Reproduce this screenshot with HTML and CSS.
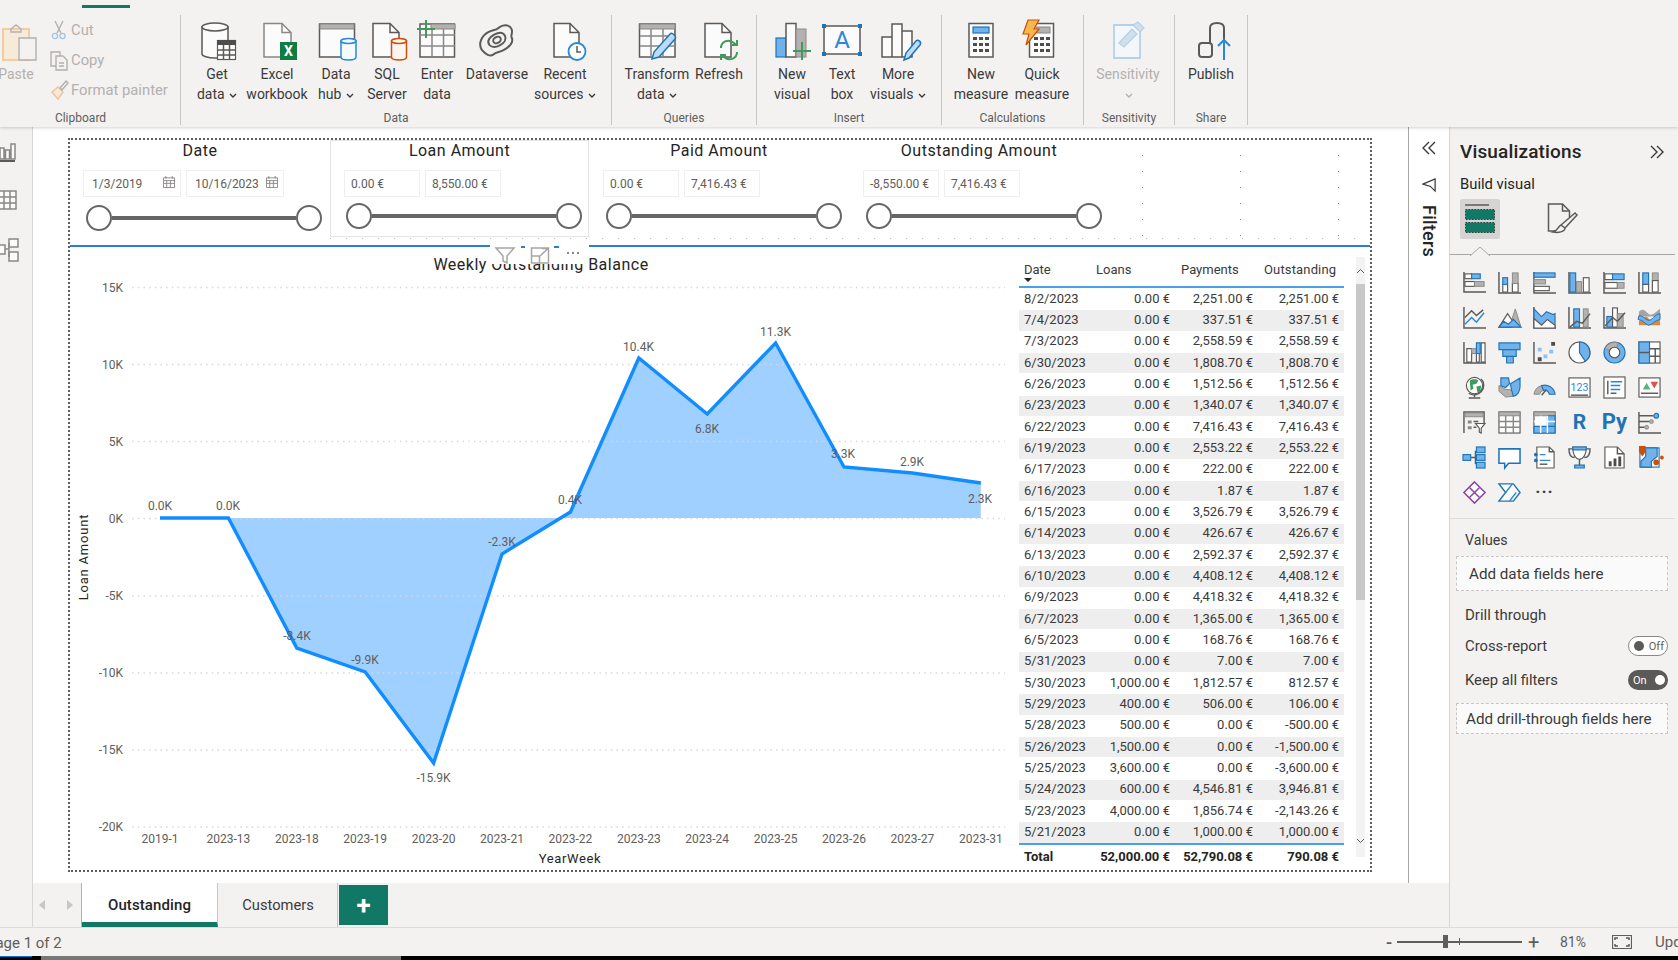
FILE: index.html
```html
<!DOCTYPE html>
<html lang="en">
<head>
<meta charset="utf-8">
<title>Weekly Outstanding Balance</title>
<link rel="stylesheet" href="styles.css">
</head>
<body>
<div class="app">
  <header class="ribbon">
    <span class="tab-ind"></span>
    <section class="grp g-clip">
      <div class="btns">
        <div class="btn b-paste dis">
          <svg class="ic" viewBox="0 0 40 40"><path class="or" d="M7 8h26v31H7z"/><path class="gl" d="M15 8l5-4 5 4v3H15z"/><path class="dw" d="M23 17h17v22H23z"/></svg>
          <span>Paste</span>
        </div>
        <div class="clip-list">
          <div class="clip-it"><svg viewBox="0 0 18 20"><path class="gl" d="M5 1l6 12M13 1L7 13"/><circle class="bp" cx="5" cy="16" r="2.6"/><circle class="bp" cx="12.5" cy="16" r="2.6"/></svg><span>Cut</span></div>
          <div class="clip-it"><svg viewBox="0 0 18 20"><path class="dw" d="M1 2h9v14H1z"/><path class="dw" d="M6 6h7l4 4v10H6z"/><path class="gl" d="M9 13h5M9 16h5"/></svg><span>Copy</span></div>
          <div class="clip-it"><svg viewBox="0 0 18 20"><path class="or2" d="M2 12l6-5 5 5-5 7z"/><path class="gl" d="M10 8l6-7 2 2-6 7z"/></svg><span>Format painter</span></div>
        </div>
      </div>
      <div class="glabel">Clipboard</div>
    </section>

    <section class="grp g-data">
      <div class="btns">
        <div class="btn w56">
          <svg class="ic" viewBox="0 0 40 40"><path class="lw" d="M5 6v27c0 2 6 4 13 4s13-2 13-4V6z"/><ellipse class="lw" cx="18" cy="6" rx="13" ry="4"/><rect class="wf" x="20.500" y="19.500" width="18" height="19"/><path class="dk" d="M20 19h19v5H20z"/><path class="ln" d="M26.500 24v15M32.500 24v15M20 29h19M20 34h19"/></svg>
          <span>Get</span><span>data <svg class="chev" viewBox="0 0 8 5"><path d="M1 1l3 3 3-3"/></svg></span>
        </div>
        <div class="btn w64">
          <svg class="ic" viewBox="0 0 40 40"><path class="lw lg" d="M7 2.500h18l9 9V36H7z"/><path class="ln lg" d="M25 2.500v9h9"/><rect class="xl" x="23" y="21" width="17" height="18"/><text class="xt" x="31.500" y="35">X</text></svg>
          <span>Excel</span><span>workbook</span>
        </div>
        <div class="btn w54">
          <svg class="ic" viewBox="0 0 40 40"><path class="lw" d="M3.500 3h35v33h-35z"/><path class="gf" d="M4 3h34v5H4z"/><path class="cyl-b" d="M25 20v16c0 2 3 3 7.500 3s7.500-1 7.500-3V20z"/><ellipse class="cyl-b" cx="32.500" cy="20" rx="7.500" ry="2.500"/></svg>
          <span>Data</span><span>hub <svg class="chev" viewBox="0 0 8 5"><path d="M1 1l3 3 3-3"/></svg></span>
        </div>
        <div class="btn w48">
          <svg class="ic" viewBox="0 0 40 40"><path class="lw" d="M6 2.500h17l9 9V36H6z"/><path class="ln" d="M23 2.500v9h9"/><path class="cyl-o" d="M24.500 20v16c0 2 3 3 7.500 3s7.500-1 7.500-3V20z"/><ellipse class="cyl-o" cx="32" cy="20" rx="7.500" ry="2.500"/></svg>
          <span>SQL</span><span>Server</span>
        </div>
        <div class="btn w52">
          <svg class="ic" viewBox="0 0 40 40"><path class="lw" d="M3 3h34.500v33H3z"/><path class="gf" d="M14 3h24v5H14z"/><path class="ln lg" d="M3 14h35M3 25h35M15 8v28M26.500 8v28"/><path class="gr" d="M9-1v18M0 8h18"/></svg>
          <span>Enter</span><span>data</span>
        </div>
        <div class="btn w68">
          <svg class="ic" viewBox="0 0 40 40"><g transform="rotate(-28 20 19)"><path class="ln th" d="M2 21c-1-8 7-13 14-13 5 0 7 2 11 1 6-1 11 2 11 7 0 4-4 5-4 8 0 5-7 7-13 7-5 0-7-2-11-1-4 1-7-4-8-9z"/><path class="ln th" d="M11 20c-1-5 4-7 9-7 6 0 9 2 9 6 0 4-4 6-9 6-5 0-8-2-9-5z"/><ellipse class="ln th" cx="20" cy="19" rx="4" ry="3"/></g></svg>
          <span>Dataverse</span>
        </div>
        <div class="btn w68">
          <svg class="ic" viewBox="0 0 40 40"><path class="lw" d="M9 2.500h16l9 9V36H9z"/><path class="ln" d="M25 2.500v9h9"/><circle class="clk" cx="32" cy="30.500" r="8.500"/><path class="ln" d="M32 25v6h4"/></svg>
          <span>Recent</span><span>sources <svg class="chev" viewBox="0 0 8 5"><path d="M1 1l3 3 3-3"/></svg></span>
        </div>
      </div>
      <div class="glabel">Data</div>
    </section>

    <section class="grp g-query">
      <div class="btns">
        <div class="btn w80">
          <svg class="ic" viewBox="0 0 40 40"><path class="lw" d="M2.500 3H38v33H2.500z"/><path class="gf" d="M3 3h35v5H3z"/><path class="ln lg" d="M3 15h35M3 25h35M14 8v28M26 8v28"/><path class="pen" d="M15 38l2-7 16-18c2-2 7 2 5 5L22 36z"/></svg>
          <span>Transform</span><span>data <svg class="chev" viewBox="0 0 8 5"><path d="M1 1l3 3 3-3"/></svg></span>
        </div>
        <div class="btn w44">
          <svg class="ic" viewBox="0 0 40 40"><path class="lw" d="M6 2.500h17l9 9V36H6z"/><path class="ln" d="M23 2.500v9h9"/><path class="gr2" d="M22 27c0-6 7-10 13-5l2 2M38 31c0 6-7 10-13 5l-2-2"/><path class="gr2" d="M38 19v5h-5M22 39v-5h5"/></svg>
          <span>Refresh</span>
        </div>
      </div>
      <div class="glabel">Queries</div>
    </section>

    <section class="grp g-insert">
      <div class="btns">
        <div class="btn w44">
          <svg class="ic" viewBox="0 0 40 40"><rect class="bf" x="4" y="17" width="10" height="19"/><rect class="lw" x="14" y="2.500" width="10" height="33.500"/><rect class="gf" x="24" y="8" width="10" height="28"/><path class="gr" d="M30 21v18M21 30h18"/></svg>
          <span>New</span><span>visual</span>
        </div>
        <div class="btn w56">
          <svg class="ic" viewBox="0 0 40 40"><rect class="lw" x="2" y="5" width="36" height="28"/><path class="sb" d="M0 3h4v4H0zM36 3h4v4h-4zM0 31h4v4H0zM36 31h4v4h-4z"/><text class="at" x="20" y="27">A</text></svg>
          <span>Text</span><span>box</span>
        </div>
        <div class="btn w56">
          <svg class="ic" viewBox="0 0 40 40"><path class="lw" d="M4 16h10v20H4zM14 3h10v33H14zM24 10h10v26H24z"/><path class="pen" d="M26 39l2-7 10-12c2-2 6 1 4 4L31 37z"/></svg>
          <span>More</span><span>visuals <svg class="chev" viewBox="0 0 8 5"><path d="M1 1l3 3 3-3"/></svg></span>
        </div>
      </div>
      <div class="glabel">Insert</div>
    </section>

    <section class="grp g-calc">
      <div class="btns">
        <div class="btn w62">
          <svg class="ic" viewBox="0 0 40 40"><rect class="lw" x="8" y="2.500" width="24" height="33.500"/><rect class="bf" x="12" y="6" width="16" height="6"/><path class="dk" d="M12 16h4v3h-4zM18 16h4v3h-4zM24 16h4v3h-4zM12 22h4v3h-4zM18 22h4v3h-4zM24 22h4v3h-4zM12 28h4v3h-4zM18 28h4v3h-4zM24 28h4v3h-4z"/></svg>
          <span>New</span><span>measure</span>
        </div>
        <div class="btn w60">
          <svg class="ic" viewBox="0 0 40 40"><rect class="lw" x="7.500" y="2.500" width="24" height="33.500"/><rect class="gf" x="14" y="6" width="14" height="6"/><path class="dk" d="M12 16h4v3h-4zM18 16h4v3h-4zM24 16h4v3h-4zM12 22h4v3h-4zM18 22h4v3h-4zM24 22h4v3h-4zM12 28h4v3h-4zM18 28h4v3h-4zM24 28h4v3h-4z"/><path class="bolt" d="M6-1h11l-5 9h5L4 24l3-11H1z"/></svg>
          <span>Quick</span><span>measure</span>
        </div>
      </div>
      <div class="glabel">Calculations</div>
    </section>

    <section class="grp g-sens">
      <div class="btns">
        <div class="btn w88 dis">
          <svg class="ic" viewBox="0 0 40 40"><path class="pb" d="M6 4h26v33H6z"/><path class="pb2" d="M11 22L24 8l5 5-13 13z"/><path class="pb2" d="M25 4l5-3 6 6-4 4z"/></svg>
          <span>Sensitivity</span><span><svg class="chev" viewBox="0 0 8 5"><path d="M1 1l3 3 3-3"/></svg></span>
        </div>
      </div>
      <div class="glabel">Sensitivity</div>
    </section>

    <section class="grp g-share">
      <div class="btns">
        <div class="btn w72">
          <svg class="ic" viewBox="0 0 40 40"><path class="ln th" d="M19 22V7c0-3 2-5 7-5s7 2 7 5v12"/><rect class="ln th" x="8" y="22" width="13" height="14" rx="3"/><path class="bl2" d="M33 39V19M27 25l6-6 6 6"/></svg>
          <span>Publish</span>
        </div>
      </div>
      <div class="glabel">Share</div>
    </section>
  </header>

  <main class="main">
    <div class="left-col">
      <div class="work">
        <nav class="leftnav">
          <svg viewBox="0 0 20 24"><path class="lw gy" d="M0 8h4v11H0zM5.500 10h4v9h-4zM11 4h4v15h-4z"/><path class="ln th" d="M0 21h15"/></svg>
          <svg viewBox="0 0 20 24"><path class="lw gy" d="M-2 2h18v18H-2z"/><path class="ln gy" d="M-2 8h18M-2 14h18M4 2v18M10 2v18"/></svg>
          <svg viewBox="0 0 20 24"><path class="lw gy" d="M9 1h9v8H9zM9 14h9v9H9zM-4 7h9v9h-9z"/><path class="ln gy" d="M5 11h4M9 5v14"/></svg>
        </nav>
        <div class="canvas">
          <div class="report">
            <div class="slicers">
              <div class="slicer s-date">
                <h3>Date</h3>
                <div class="inputs">
                  <div class="inp date">1/3/2019<svg class="cal" viewBox="0 0 13 13"><path class="cal-l" d="M.5 2h12v10.500H.5z"/><path class="cal-l" d="M.5 5h12M3 0v3M10 0v3M.5 8h12M4 5v7M8 5v7"/></svg></div>
                  <div class="inp date">10/16/2023<svg class="cal" viewBox="0 0 13 13"><path class="cal-l" d="M.5 2h12v10.500H.5z"/><path class="cal-l" d="M.5 5h12M3 0v3M10 0v3M.5 8h12M4 5v7M8 5v7"/></svg></div>
                </div>
                <div class="slider low"><i></i><b></b><i></i></div>
              </div>
              <div class="slicer sel">
                <h3>Loan Amount</h3>
                <div class="inputs"><div class="inp">0.00 €</div><div class="inp">8,550.00 €</div></div>
                <div class="slider"><i></i><b></b><i></i></div>
              </div>
              <div class="slicer s-r">
                <h3>Paid Amount</h3>
                <div class="inputs"><div class="inp">0.00 €</div><div class="inp">7,416.43 €</div></div>
                <div class="slider"><i></i><b></b><i></i></div>
              </div>
              <div class="slicer s-r">
                <h3>Outstanding Amount</h3>
                <div class="inputs"><div class="inp">-8,550.00 €</div><div class="inp">7,416.43 €</div></div>
                <div class="slider"><i></i><b></b><i></i></div>
              </div>
            </div>
            <div class="blue-rule"></div>
            <div class="visuals">
              <svg class="chart" viewBox="70 247 945 623" width="945" height="623">
                <text class="c-title" x="541" y="270">Weekly Outstanding Balance</text>
                <polygon class="area" points="228.400,518 296.800,648 365.200,672 433.600,763 502,554 570.400,512 638.800,358 707.200,414 775.600,343 844,467 912.400,473 980.800,483 980.800,518"/>
                <g class="grid">
                  <path d="M132 287.500H1005M132 364.500H1005M132 441.500H1005M132 518.500H1005M132 596H1005M132 673H1005M132 750H1005M132 827H1005"/>
                </g>
                <polyline class="line" points="160,518 228.400,518 296.800,648 365.200,672 433.600,763 502,554 570.400,512 638.800,358 707.200,414 775.600,343 844,467 912.400,473 980.800,483"/>
                <g class="y-lab">
                  <text x="123" y="292">15K</text><text x="123" y="369">10K</text><text x="123" y="446">5K</text><text x="123" y="523">0K</text>
                  <text x="123" y="600">-5K</text><text x="123" y="677">-10K</text><text x="123" y="754">-15K</text><text x="123" y="831">-20K</text>
                </g>
                <g class="x-lab">
                  <text x="160" y="843">2019-1</text><text x="228.400" y="843">2023-13</text><text x="296.800" y="843">2023-18</text><text x="365.200" y="843">2023-19</text><text x="433.600" y="843">2023-20</text><text x="502" y="843">2023-21</text><text x="570.400" y="843">2023-22</text><text x="638.800" y="843">2023-23</text><text x="707.200" y="843">2023-24</text><text x="775.600" y="843">2023-25</text><text x="844" y="843">2023-26</text><text x="912.400" y="843">2023-27</text><text x="980.800" y="843">2023-31</text>
                </g>
                <g class="x-lab">
                  <text x="160" y="510">0.0K</text><text x="228" y="510">0.0K</text><text x="297" y="640">-8.4K</text><text x="365" y="664">-9.9K</text><text x="433.500" y="782">-15.9K</text><text x="502" y="546">-2.3K</text><text x="570" y="504">0.4K</text><text x="638.500" y="351">10.4K</text><text x="707" y="433">6.8K</text><text x="775.500" y="336">11.3K</text><text x="843" y="458">3.3K</text><text x="912" y="466">2.9K</text><text x="980" y="503">2.3K</text>
                </g>
                <text class="ax-t" x="570" y="863">YearWeek</text>
                <text class="ax-t ax-y" transform="translate(88 557) rotate(-90)">Loan Amount</text>
              </svg>
              <table class="tbl">
                <thead>
                  <tr><th>Date<span class="sort"></span></th><th>Loans</th><th>Payments</th><th>Outstanding</th></tr>
                </thead>
                <tbody>
                  <tr><td>8/2/2023</td><td>0.00 €</td><td>2,251.00 €</td><td>2,251.00 €</td></tr>
                  <tr><td>7/4/2023</td><td>0.00 €</td><td>337.51 €</td><td>337.51 €</td></tr>
                  <tr><td>7/3/2023</td><td>0.00 €</td><td>2,558.59 €</td><td>2,558.59 €</td></tr>
                  <tr><td>6/30/2023</td><td>0.00 €</td><td>1,808.70 €</td><td>1,808.70 €</td></tr>
                  <tr><td>6/26/2023</td><td>0.00 €</td><td>1,512.56 €</td><td>1,512.56 €</td></tr>
                  <tr><td>6/23/2023</td><td>0.00 €</td><td>1,340.07 €</td><td>1,340.07 €</td></tr>
                  <tr><td>6/22/2023</td><td>0.00 €</td><td>7,416.43 €</td><td>7,416.43 €</td></tr>
                  <tr><td>6/19/2023</td><td>0.00 €</td><td>2,553.22 €</td><td>2,553.22 €</td></tr>
                  <tr><td>6/17/2023</td><td>0.00 €</td><td>222.00 €</td><td>222.00 €</td></tr>
                  <tr><td>6/16/2023</td><td>0.00 €</td><td>1.87 €</td><td>1.87 €</td></tr>
                  <tr><td>6/15/2023</td><td>0.00 €</td><td>3,526.79 €</td><td>3,526.79 €</td></tr>
                  <tr><td>6/14/2023</td><td>0.00 €</td><td>426.67 €</td><td>426.67 €</td></tr>
                  <tr><td>6/13/2023</td><td>0.00 €</td><td>2,592.37 €</td><td>2,592.37 €</td></tr>
                  <tr><td>6/10/2023</td><td>0.00 €</td><td>4,408.12 €</td><td>4,408.12 €</td></tr>
                  <tr><td>6/9/2023</td><td>0.00 €</td><td>4,418.32 €</td><td>4,418.32 €</td></tr>
                  <tr><td>6/7/2023</td><td>0.00 €</td><td>1,365.00 €</td><td>1,365.00 €</td></tr>
                  <tr><td>6/5/2023</td><td>0.00 €</td><td>168.76 €</td><td>168.76 €</td></tr>
                  <tr><td>5/31/2023</td><td>0.00 €</td><td>7.00 €</td><td>7.00 €</td></tr>
                  <tr><td>5/30/2023</td><td>1,000.00 €</td><td>1,812.57 €</td><td>812.57 €</td></tr>
                  <tr><td>5/29/2023</td><td>400.00 €</td><td>506.00 €</td><td>106.00 €</td></tr>
                  <tr><td>5/28/2023</td><td>500.00 €</td><td>0.00 €</td><td>-500.00 €</td></tr>
                  <tr><td>5/26/2023</td><td>1,500.00 €</td><td>0.00 €</td><td>-1,500.00 €</td></tr>
                  <tr><td>5/25/2023</td><td>3,600.00 €</td><td>0.00 €</td><td>-3,600.00 €</td></tr>
                  <tr><td>5/24/2023</td><td>600.00 €</td><td>4,546.81 €</td><td>3,946.81 €</td></tr>
                  <tr><td>5/23/2023</td><td>4,000.00 €</td><td>1,856.74 €</td><td>-2,143.26 €</td></tr>
                  <tr><td>5/21/2023</td><td>0.00 €</td><td>1,000.00 €</td><td>1,000.00 €</td></tr>
                </tbody>
                <tfoot>
                  <tr><td>Total</td><td>52,000.00 €</td><td>52,790.08 €</td><td>790.08 €</td></tr>
                </tfoot>
              </table>
              <div class="vscroll">
                <div class="vs-btn"><svg viewBox="0 0 9 6"><path d="M1 5l3.500-3.500L8 5"/></svg></div>
                <div class="vs-thumb"></div>
                <div class="vs-track"><svg viewBox="0 0 9 6"><path d="M1 1l3.500 3.500L8 1"/></svg></div>
              </div>
              <svg class="vis-head" viewBox="0 0 99 24">
                <rect class="vh-bg" width="99" height="24"/>
                <path class="vh-dash" d="M31 6h4v2h-4zM64 6h5v2h-5z"/>
                <path class="vh-ic" d="M6 8h18l-7 8v7l-4-2v-5z"/>
                <path class="vh-ic" d="M41.500 8h17v15h-17zM41.500 16h8v7M50 16l8-7.500M52 8.500h6.500V14"/>
                <path class="vh-dots" d="M77 12h2v2h-2zM82 12h2v2h-2zM87 12h2v2h-2z"/>
              </svg>
            </div>
          </div>
        </div>
        <aside class="filters">
          <svg class="dbl" viewBox="0 0 16 16"><path d="M8 2L2 8l6 6M14 2L8 8l6 6"/></svg>
          <svg class="fun" viewBox="0 0 16 16"><path d="M14 1v13L9 9 1 6.500z"/></svg>
          <span class="f-txt">Filters</span>
        </aside>
      </div>
      <div class="tabbar">
        <div class="tb-gutter"></div>
        <div class="tb-arrows"><span class="arr-l"></span><span class="arr-r"></span></div>
        <div class="tab on">Outstanding</div>
        <div class="tab">Customers</div>
        <div class="tab-add">+</div>
      </div>
    </div>

    <aside class="viz">
      <div class="viz-head"><h2>Visualizations</h2><svg class="dbl" viewBox="0 0 16 16"><path d="M2 2l6 6-6 6M8 2l6 6-6 6"/></svg></div>
      <div class="bv">Build visual</div>
      <div class="bv-row">
        <div class="bv-sel"><svg viewBox="0 0 32 32"><path class="ln" d="M1 2h24"/><rect class="grn" x="1.500" y="6.500" width="29" height="10"/><rect class="grn" x="1.500" y="19.500" width="29" height="10"/></svg></div>
        <svg class="bv-fmt" viewBox="0 0 32 32"><path class="ln" d="M9 28H1.500V1h14l7 7v6"/><path class="ln" d="M15.500 1v7h7"/><path class="ln" d="M14 22L28 10l2 2-12 13zM14 22c-3 1-2 5-8 7 5 1 12 0 12-4"/></svg>
      </div>
      <div class="notch-row"><svg class="notch" viewBox="0 0 20 10"><path d="M0 10L10 1l10 9"/></svg></div>
      <div class="icons">
        <svg viewBox="0 0 24 24"><path class="ln" d="M1 1v21h23"/><rect class="wf" x="2" y="3" width="7" height="5"/><rect class="bf" x="9" y="3" width="9" height="5"/><rect class="wf" x="2" y="11" width="10" height="5"/><rect class="gf" x="12" y="11" width="10" height="5"/></svg>
        <svg viewBox="0 0 24 24"><path class="ln" d="M1 1v22h23"/><rect class="wf" x="5" y="14" width="5" height="8"/><rect class="bf" x="5" y="7" width="5" height="7"/><rect class="wf" x="15" y="13" width="6" height="9"/><rect class="gf" x="15" y="2" width="6" height="11"/></svg>
        <svg viewBox="0 0 24 24"><path class="ln" d="M1 1v22h23"/><rect class="bf" x="1" y="2" width="22" height="4.500"/><rect class="gf" x="1" y="9" width="12" height="4.500"/><rect class="wf" x="1" y="16" width="16" height="4.500"/></svg>
        <svg viewBox="0 0 24 24"><path class="ln" d="M1 1v22h23"/><rect class="bf" x="2" y="2" width="6" height="20"/><rect class="gf" x="9" y="11" width="5" height="11"/><rect class="wf" x="16" y="7" width="6" height="15"/></svg>
        <svg viewBox="0 0 24 24"><path class="ln" d="M1 1v22h23"/><rect class="wf" x="2" y="3" width="8" height="6"/><rect class="bf" x="10" y="3" width="12" height="6"/><rect class="wf" x="2" y="12" width="13" height="6"/><rect class="gf" x="15" y="12" width="7" height="6"/></svg>
        <svg viewBox="0 0 24 24"><path class="ln" d="M1 1v22h23"/><rect class="bf" x="5" y="2" width="6" height="12"/><rect class="wf" x="5" y="14" width="6" height="8"/><rect class="gf" x="15" y="2" width="6" height="8"/><rect class="wf" x="15" y="10" width="6" height="12"/></svg>

        <svg viewBox="0 0 24 24"><path class="ln" d="M1 1v22h23"/><path class="ln" d="M2 12l7-7 5 5 7-6"/><path class="bl" d="M2 19l7-7 5 5 8-10"/></svg>
        <svg viewBox="0 0 24 24"><path class="gf" d="M12 22L18 3l6 19z"/><path class="wf" d="M1 22l9-14 6 9-2 5z"/><path class="bf" d="M1 22l5-6 5 3 5-5 8 8z"/></svg>
        <svg viewBox="0 0 24 24"><path class="ln" d="M1 1v22h23"/><path class="bf" d="M1 3l8 8 5-5 7 3 2-1v14H1z"/><path class="wf" d="M1 13l8 7 6-6 8 6v3H1z"/></svg>
        <svg viewBox="0 0 24 24"><path class="ln" d="M1 1v22h23"/><rect class="bf" x="6" y="3" width="6" height="19"/><rect class="gf" x="16" y="3" width="5" height="19"/><path class="ln" d="M2 22l7-6 6 2 8-10"/></svg>
        <svg viewBox="0 0 24 24"><path class="ln" d="M1 1v22h23"/><rect class="bf" x="4" y="11" width="6" height="11"/><rect class="wf" x="10" y="2" width="5" height="20"/><rect class="gf" x="15" y="8" width="6" height="14"/><path class="ln" d="M2 21l8-9 5 4 8-9"/></svg>
        <svg viewBox="0 0 24 24"><path class="rg" d="M1 6c6-6 8 3 12 3s6-4 10-6v8H1z"/><path class="ro" d="M1 15c4 0 5-4 8-4l5 5 9-4v8H1z"/><path class="rb" d="M1 10c5 0 6 4 10 5 4 0 6-6 12-7v6c-6 1-8 6-12 6-4-1-6-6-11-6z"/></svg>

        <svg viewBox="0 0 24 24"><path class="ln" d="M1 1v22h23"/><path class="wf" d="M4 8h5v14H4zM14 10h3v12h-3zM19 2h4v20h-4z"/><path class="gf" d="M9 8h5v5H9z"/><path class="bf" d="M14 2h4v11h-4z"/></svg>
        <svg viewBox="0 0 24 24"><path class="bf" d="M1 2h22v7H1zM5 9h14v7H5zM9 16h7v7H9z"/></svg>
        <svg viewBox="0 0 24 24"><path class="ln" d="M1 1v22h23"/><path class="sq1" d="M5 7h4v4H5zM11 14h4v4h-4zM17 9h4v4h-4z"/><path class="dk" d="M5 17h4v4H5zM19 1h4v4h-4z"/></svg>
        <svg viewBox="0 0 24 24"><circle class="wf" cx="12" cy="12" r="11"/><path class="bf" d="M12 1a11 11 0 0 1 6 20L12 12z"/></svg>
        <svg viewBox="0 0 24 24"><circle class="bf" cx="12" cy="12" r="11"/><path class="gf" d="M2 8a11 11 0 0 1 14-6l-2 5a6 6 0 0 0-7 3z"/><circle class="wf" cx="12" cy="12" r="5.500"/></svg>
        <svg viewBox="0 0 24 24"><rect class="wf" x="1" y="1" width="22" height="22"/><path class="bf" d="M1 1h11v22H1z"/><path class="ln" d="M1 12h11M12 8h11M12 16h11M18 8v15"/></svg>

        <svg viewBox="0 0 24 24"><circle class="wf" cx="12" cy="10" r="8.500"/><path class="gob" d="M7 5c3-2 7-2 9 0l-2 3-4 1 1 4-3 2zM14 11l5-1-1 6-3 1z"/><path class="ln" d="M19 3a10 10 0 0 1-13 15M12 19v3M6 23h12"/></svg>
        <svg viewBox="0 0 24 24"><path class="gf" d="M1 10v6l7 6 9-1 3-6-12-1z"/><path class="bf" d="M3 2l8 0 1 6-4 4-5-2zM13 8l10-6v9c0 5-3 10-7 10l-2-7z"/></svg>
        <svg viewBox="0 0 24 24"><path class="gf" d="M1 19a11 11 0 0 1 8-9l2 5a5 5 0 0 0-4 4z"/><path class="bf" d="M9 10a11 11 0 0 1 14 9h-6a5 5 0 0 0-6-4z"/><path class="ln" d="M9 20l5-6"/></svg>
        <svg viewBox="0 0 24 24"><rect class="wf" x="1" y="2" width="22" height="20"/><text class="num" x="12" y="16">123</text><path class="ln" d="M3 20h18"/></svg>
        <svg viewBox="0 0 24 24"><rect class="wf" x="1" y="1" width="22" height="22"/><path class="ln" d="M5 5v14"/><path class="bl" d="M8 6h12M8 10h10M8 14h10"/><path class="ln" d="M8 18h6"/></svg>
        <svg viewBox="0 0 24 24"><rect class="wf" x="1" y="2" width="22" height="20"/><path class="tg" d="M5 14l4-7 4 7z"/><path class="tr" d="M13 6h8l-4 7z"/><path class="ln" d="M3 18h18"/></svg>

        <svg viewBox="0 0 24 24"><path class="ln" d="M1 23V1h21v12"/><path class="gf" d="M2 2h19v4H2z"/><path class="sq2" d="M5 10h4v3H5zM5 16h4v3H5z"/><path class="ln" d="M11 11h5M11 17h3"/><path class="wf" d="M13 13h10l-4 5v5l-2-1v-4z"/></svg>
        <svg viewBox="0 0 24 24"><rect class="wf" x="1" y="1" width="22" height="22"/><path class="gf" d="M1 1h22v4H1z"/><path class="ln lg" d="M1 11h22M1 17h22M8 5v18M16 5v18"/></svg>
        <svg viewBox="0 0 24 24"><rect class="wf" x="1" y="1" width="22" height="22"/><path class="gf" d="M1 1h22v4H1z"/><path class="bf" d="M1 16h22v7H1zM15 5h8v18h-8z"/><path class="ln lw0" d="M1 11h22M8 5v18M15 5v18"/></svg>
        <div class="txt-ic r">R</div>
        <div class="txt-ic py">Py</div>
        <svg viewBox="0 0 24 24"><path class="ln" d="M1 1v22h23"/><path class="ln" d="M1 5h15M1 11h11M1 17h6"/><circle class="bf" cx="19" cy="5" r="2.500"/><circle class="gf" cx="14" cy="11" r="2"/><circle class="gf" cx="9" cy="17" r="2"/></svg>

        <svg viewBox="0 0 24 24"><path class="ln" d="M8 12h5M13 5v14"/><rect class="bf" x="0" y="9" width="8" height="6"/><rect class="bf" x="14" y="1" width="9" height="6"/><rect class="bf" x="14" y="9" width="9" height="6"/><rect class="bf" x="14" y="17" width="9" height="6"/></svg>
        <svg viewBox="0 0 24 24"><path class="bub" d="M1 3h22v15H11l-4 5v-5H1z"/></svg>
        <svg viewBox="0 0 24 24"><path class="wf" d="M4 1h13l5 5v17H4z"/><path class="ln" d="M17 1v5h5"/><circle class="sb" cx="3" cy="9" r="2"/><circle class="sb" cx="3" cy="15" r="2"/><path class="bl" d="M7 9h6M7 15h11"/><path class="ln" d="M7 19h8"/></svg>
        <svg viewBox="0 0 24 24"><path class="ln" d="M5 3H1c0 6 2 9 6 9M19 3h4c0 6-2 9-6 9"/><path class="wf" d="M5 1h14c0 8-2 12-7 13C7 13 5 9 5 1z"/><path class="bf" d="M5 1h14v3H5zM7 20h10v3H7z"/><path class="ln" d="M12 14v6"/></svg>
        <svg viewBox="0 0 24 24"><path class="wf" d="M2 1h13l7 7v15H2z"/><path class="ln" d="M15 1v7h7"/><path class="dk" d="M6 16h3v5H6zM11 13h3v8h-3zM16 11h3v10h-3z"/></svg>
        <svg viewBox="0 0 24 24"><rect class="wf mapb" x="2" y="2" width="20" height="20"/><path class="bf" d="M8 2h12v9l-6 5v6H3v-6l5-5z"/><path class="sf" d="M1 0h7v6l-3.500 5L1 6zM19 14a3 3 0 1 1 0 6 3 3 0 0 1 0-6zM23 12a2 2 0 1 1 0 .1z"/></svg>

        <svg viewBox="0 0 24 24"><path class="pa" d="M12 1l11 11-11 11L1 12z"/><path class="pa" d="M7 7l10 10M17 7L7 17"/></svg>
        <svg viewBox="0 0 24 24"><path class="bf2" d="M1 3h15l7 9-7 9H1l7-9z"/><path class="bl" d="M8 12l7-9M12 21l7-9"/></svg>
        <div class="txt-ic more">···</div>
      </div>
      <div class="viz-rule"></div>
      <div class="sec-t">Values</div>
      <div class="drop d1">Add data fields here</div>
      <div class="sec-h">Drill through</div>
      <div class="opt o1"><span>Cross-report</span><span class="tgl off"><i></i>Off</span></div>
      <div class="opt o2"><span>Keep all filters</span><span class="tgl on">On<i></i></span></div>
      <div class="drop d2">Add drill-through fields here</div>
    </aside>
  </main>

  <footer class="status">
    <span class="pg">Page 1 of 2</span>
    <div class="st-right">
      <span class="zm">-</span>
      <div class="zslider"><i class="z-h"></i><i class="z-t"></i></div>
      <span class="zp">+</span>
      <span class="pct">81%</span>
      <svg class="fit" viewBox="0 0 20 14"><path class="fit-b" d="M.5.500h19v13H.5z"/><path class="ln" d="M3 5V3h3M17 5V3h-3M3 9v2h3M17 9v2h-3"/></svg>
      <span class="upd">Update available</span>
    </div>
  </footer>
  <div class="taskbar"><span class="t-a"></span><span class="t-b"></span><span class="t-c"></span><span class="t-d"></span></div>
</div>
</body>
</html>
```
FILE: styles.css
```css
* { box-sizing: border-box; }
html, body { margin: 0; height: 100%; overflow: hidden; }
body { font-family: Roboto, "Liberation Sans", sans-serif; color: #252423; background: #f3f2f1; }
.app { width: 1678px; height: 960px; display: flex; flex-direction: column; overflow: hidden; }

/* ribbon */
.ribbon { position: relative; z-index: 2; height: 127px; flex: none; display: flex; padding-top: 15px; background: #f3f2f1; box-shadow: 0 1px 3px rgba(0,0,0,.18); }
.tab-ind { position: absolute; left: 82px; top: 5px; width: 48px; height: 3px; background: #117865; }
.grp { display: flex; flex-direction: column; height: 110px; border-right: 1px solid #c8c6c4; flex: none; }
.g-clip { width: 200px; margin-left: -19px; }
.g-data { width: 431px; }
.g-data .btns { padding-left: 8px; }
.g-query { width: 145px; }
.g-query .btns { padding-left: 5px; }
.g-insert { width: 185px; }
.g-insert .btns { padding-left: 13px; }
.g-calc { width: 142px; }
.g-calc .btns { padding-left: 8px; }
.g-sens { width: 91px; }
.g-share { width: 73px; }
.btns { display: flex; height: 97px; flex: none; }
.glabel { font-size: 12px; line-height: 13px; color: #605e5c; text-align: center; }
.btn { display: flex; flex-direction: column; align-items: center; font-size: 14px; line-height: 20px; color: #3b3a39; white-space: nowrap; padding-top: 6px; flex: none; }
.btn > span { height: 20px; display: block; }
.ic { width: 40px; height: 40px; overflow: visible; margin-bottom: 3px; flex: none; }
.w44 { width: 44px; } .w48 { width: 48px; } .w52 { width: 52px; } .w54 { width: 54px; } .w56 { width: 56px; }
.w60 { width: 60px; } .w62 { width: 62px; } .w64 { width: 64px; } .w68 { width: 68px; } .w72 { width: 72px; } .w80 { width: 80px; } .w88 { width: 88px; }
.dis, .dis span { color: #b3b0ad; }
.b-paste { width: 70px; }
.clip-list { display: flex; flex-direction: column; margin-left: -1px; }
.clip-it { display: flex; align-items: center; height: 30px; font-size: 14.800px; color: #b3b0ad; white-space: nowrap; }
.clip-it svg { width: 18px; height: 20px; margin-right: 3px; overflow: visible; }
.chev { width: 8px; height: 5px; vertical-align: 1px; margin-left: 1px; }
.chev path { fill: none; stroke: #3b3a39; stroke-width: 1.4; }
.dis .chev path { stroke: #b3b0ad; }

/* svg paints */
.ln { fill: none; stroke: #5c5a58; stroke-width: 1.5; }
.lw { fill: #fbfbfb; stroke: #5c5a58; stroke-width: 1.5; }
.lg { stroke: #8a8886; }
.lw0 { stroke: #fff; }
.gy { stroke: #8a8886; }
.th { stroke-width: 2; }
.wf { fill: #fff; stroke: #5c5a58; stroke-width: 1.2; }
.gf { fill: #b4b2b0; stroke: #8a8886; stroke-width: 1; }
.bf { fill: #72b2ea; stroke: #1f74b8; stroke-width: 1.2; }
.bf2 { fill: #fff; stroke: #1f74b8; stroke-width: 1.5; }
.bl { fill: none; stroke: #2b88d8; stroke-width: 1.5; }
.bl2 { fill: none; stroke: #2b88d8; stroke-width: 2; }
.dk { fill: #4f4d4b; }
.sb { fill: #1f74b8; }
.sf { fill: #ca5010; }
.gr { fill: none; stroke: #3f9a5b; stroke-width: 2; }
.gr2 { fill: none; stroke: #3f9a5b; stroke-width: 2; }
.xl { fill: #107c41; }
.xt { fill: #fff; font-size: 14px; font-weight: 700; text-anchor: middle; }
.at { fill: #2b88d8; font-size: 24px; text-anchor: middle; }
.cyl-b { fill: #f5fafd; stroke: #2b88d8; stroke-width: 1.5; }
.cyl-o { fill: #fdf6ef; stroke: #ca5010; stroke-width: 1.5; }
.clk { fill: #fff; stroke: #2b88d8; stroke-width: 1.8; }
.pen { fill: #bcdcf5; stroke: #1f74b8; stroke-width: 1.5; }
.bolt { fill: #f7b84b; stroke: #ca5010; stroke-width: 1.2; }
.pb { fill: #f3f7fa; stroke: #b3d2e8; stroke-width: 1.8; }
.pb2 { fill: #cfe0ec; stroke: #b3d2e8; stroke-width: 1.2; }
.or { fill: #f7ead9; stroke: #f2cda4; stroke-width: 2; }
.or2 { fill: #f7ead9; stroke: #eec49a; stroke-width: 1.4; }
.gl { fill: none; stroke: #b3b0ad; stroke-width: 1.4; }
.dw { fill: #f3f2f1; stroke: #b3b0ad; stroke-width: 1.4; }
.bp { fill: none; stroke: #9fc6e6; stroke-width: 1.3; }
.rg { fill: #a6a4a2; }
.ro { fill: #d98a3c; }
.rb { fill: #72b2ea; stroke: #1f74b8; stroke-width: 1; }
.sq1 { fill: #8fc1ea; }
.sq2 { fill: #8a8886; }
.gob { fill: #3f9a5b; }
.tg { fill: #5cb37a; }
.tr { fill: #d9534f; }
.bub { fill: #fff; stroke: #1f74b8; stroke-width: 1.6; }
.pa { fill: #fff; stroke: #8e44a8; stroke-width: 1.6; }
.mapb { stroke: #1f74b8; }
.num { fill: #2b88d8; font-size: 11px; text-anchor: middle; }
.grn { fill: #117865; stroke: #3b3a39; stroke-width: 1; stroke-dasharray: 1.5 1.5; }

/* main */
.main { height: 800px; flex: none; display: flex; }
.left-col { width: 1449px; flex: none; display: flex; flex-direction: column; }
.work { height: 756px; flex: none; display: flex; background: #fff; }
.leftnav { width: 33px; flex: none; background: #f3f2f1; border-right: 1px solid #d8d6d4; padding-top: 13px; display: flex; flex-direction: column; gap: 25px; overflow: hidden; }
.leftnav svg { width: 20px; height: 24px; display: block; overflow: visible; flex: none; }
.canvas { width: 1375px; flex: none; padding: 11px 0 0 35px; }
.report { width: 1304px; height: 734px; border: 2px dotted #605e5c; display: flex; flex-direction: column; }
.slicers { height: 105px; flex: none; display: flex; align-items: flex-start;
  background-image:
    repeating-linear-gradient(90deg, #b8b8b8 0 1px, transparent 1px 16px),
    repeating-linear-gradient(180deg, #8a8a8a 0 1px, transparent 1px 16px),
    repeating-linear-gradient(180deg, #8a8a8a 0 1px, transparent 1px 16px),
    repeating-linear-gradient(180deg, #8a8a8a 0 1px, transparent 1px 16px);
  background-size: 1040px 1px, 1px 85px, 1px 85px, 1px 85px;
  background-position: 260px 98px, 1072px 15px, 1170px 15px, 1268px 15px;
  background-repeat: no-repeat; }
.slicer { width: 260px; height: 97px; flex: none; padding-left: 14px; background: #fff; }
.sel { width: 259px; box-shadow: inset 0 0 0 1px #e4e4e4; }
.slicer h3 { margin: 0 0 0 -14px; font-size: 16px; font-weight: 400; line-height: 22px; text-align: center; letter-spacing: .5px; color: #252423; }
.inputs { display: flex; gap: 5px; margin-top: 8px; }
.s-date .inputs { margin-left: -1px; }
.inp { width: 76px; height: 27px; border: 1px solid #efefef; display: flex; align-items: center; padding-left: 6px; font-size: 12px; color: #605e5c; white-space: nowrap; }
.date { width: 98px; padding-left: 8px; justify-content: space-between; padding-right: 5px; }
.cal { width: 12px; height: 12px; flex: none; margin-top: -4px; }
.cal-l { fill: none; stroke: #8a8886; stroke-width: 1; }
.slider { display: flex; align-items: center; width: 236px; margin: 6px 0 0 2px; }
.s-r .slider { margin-left: 3px; }
.low { margin-top: 8px; }
.slider i { width: 26px; height: 26px; border: 2px solid #666; border-radius: 50%; background: #fff; flex: none; }
.slider b { flex: 1; height: 4px; background: #666; }
.blue-rule { height: 2px; flex: none; background: #2b7cd3; }
.visuals { position: relative; display: flex; flex: 1; align-items: flex-start; }
.chart { flex: none; display: block; }
.c-title { font-size: 16px; letter-spacing: .5px; text-anchor: middle; fill: #252423; }
.area { fill: #a0d0ff; }
.grid path { fill: none; stroke: #d8d8d8; stroke-width: 1.5; stroke-dasharray: 1.5 4.2; }
.line { fill: none; stroke: #118dff; stroke-width: 3.4; stroke-linejoin: miter; }
.y-lab text { font-size: 12px; fill: #605e5c; text-anchor: end; }
.x-lab text { font-size: 12px; fill: #605e5c; text-anchor: middle; }
.ax-t { font-size: 13px; letter-spacing: .6px; fill: #252423; text-anchor: middle; }
.ax-y { letter-spacing: .8px; }
.tbl { width: 325px; margin: 10px 0 0 4px; table-layout: fixed; border-collapse: separate; border-spacing: 0; font-size: 13px; color: #3b3a39; flex: none; }
.tbl th:nth-child(1), .tbl td:nth-child(1) { width: 71px; }
.tbl th:nth-child(2), .tbl td:nth-child(2) { width: 85px; }
.tbl th:nth-child(3), .tbl td:nth-child(3) { width: 83px; }
.tbl th:nth-child(4), .tbl td:nth-child(4) { width: 86px; }
.tbl th { height: 31px; padding: 4px 0 0 6px; vertical-align: top; font-weight: 400; line-height: 18px; text-align: left; border-bottom: 2px solid #4aa0ec; color: #3b3a39; }
.tbl th:first-child { padding-left: 5px; }
.tbl th:last-child { letter-spacing: .15px; }
.sort { display: block; width: 0; height: 0; margin: -1px 0 0 0; border: 4px solid transparent; border-top-color: #252423; border-bottom: 0; }
.tbl td { height: 21.33px; padding: 0 5px 0 0; line-height: 16px; text-align: right; white-space: nowrap; }
.tbl td:first-child { text-align: left; padding-left: 5px; }
.tbl tbody tr:nth-child(even) td { background: #eeeeee; box-shadow: inset 0 1px 0 #fff; }
.tbl tfoot td { height: 26px; font-weight: 700; color: #252423; border-top: 2px solid #4aa0ec; }
.vscroll { width: 9px; height: 600px; margin: 10px 0 0 12px; display: flex; flex-direction: column; flex: none; background: #f3f3f3; }
.vs-btn { height: 27px; display: flex; align-items: center; justify-content: center; flex: none; }
.vs-thumb { height: 316px; background: #c8c8c8; flex: none; }
.vs-track { flex: 1; display: flex; align-items: flex-end; justify-content: center; padding-bottom: 13px; }
.vscroll svg { width: 9px; height: 6px; }
.vscroll path { fill: none; stroke: #605e5c; stroke-width: 1; }
.vis-head { position: absolute; left: 420px; top: -7px; width: 99px; height: 24px; }
.vh-bg { fill: #fff; }
.vh-dash { fill: #2b7cd3; }
.vh-ic { fill: none; stroke: #a8a6a4; stroke-width: 1.5; }
.vh-dots { fill: #8a8886; }

.filters { width: 41px; flex: none; border-left: 1px solid #a9a7a5; display: flex; flex-direction: column; align-items: center; background: #fff; }
.dbl { width: 16px; height: 16px; flex: none; }
.dbl path { fill: none; stroke: #3b3a39; stroke-width: 1.4; }
.filters .dbl { margin-top: 13px; }
.fun { width: 15px; height: 15px; margin-top: 22px; }
.fun path { fill: none; stroke: #3b3a39; stroke-width: 1.3; }
.f-txt { writing-mode: vertical-rl; font-size: 18px; font-weight: 500; margin-top: 12px; color: #252423; letter-spacing: .25px; }

/* tabs */
.tabbar { height: 44px; flex: none; display: flex; background: #f3f2f1; }
.tb-gutter { width: 33px; flex: none; border-right: 1px solid #d8d6d4; }
.tb-arrows { width: 49px; flex: none; border-right: 1px solid #b3b0ad; display: flex; align-items: center; gap: 22px; padding-left: 6px; }
.arr-l { width: 0; height: 0; border: 5px solid transparent; border-left: 0; border-right: 6px solid #c8c6c4; }
.arr-r { width: 0; height: 0; border: 5px solid transparent; border-right: 0; border-left: 6px solid #c8c6c4; }
.tab { display: flex; align-items: center; justify-content: center; width: 120px; font-size: 14.700px; color: #3b3a39; border-right: 1px solid #c8c6c4; padding-left: 1px; }
.tab.on { width: 136px; background: #fff; color: #252423; font-size: 15px; font-weight: 500; letter-spacing: .1px; border-bottom: 5px solid #117865; padding: 5px 0 0; }
.tab-add { width: 49px; height: 40px; margin: 2px 0 0 1px; background: #117865; color: #fff; font-size: 26px; font-weight: 700; display: flex; align-items: center; justify-content: center; line-height: 1; }

/* viz pane */
.viz { width: 229px; flex: none; border-left: 1px solid #d8d6d4; background: #f3f2f1; display: flex; flex-direction: column; overflow: hidden; }
.viz-head { display: flex; align-items: center; justify-content: space-between; padding: 14px 13px 0 10px; height: 36px; flex: none; }
.viz-head h2 { margin: 0; font-size: 19px; font-weight: 500; line-height: 22px; color: #252423; letter-spacing: .15px; }
.bv { margin: 12px 0 0 10px; font-size: 14.800px; line-height: 18px; color: #252423; flex: none; }
.bv-row { display: flex; align-items: center; margin: 6px 0 0 10px; flex: none; }
.bv-sel { width: 40px; height: 40px; background: #d6d4d2; display: flex; align-items: center; justify-content: center; border-radius: 2px; }
.bv-sel svg { width: 32px; height: 32px; }
.bv-fmt { width: 32px; height: 32px; margin-left: 47px; }
.notch-row { height: 10px; margin: 6px 3px 0 0; border-bottom: 1px solid #a9a7a5; flex: none; }
.notch { display: block; width: 20px; height: 10px; margin-left: 20px; position: relative; top: 1px; }
.notch path { fill: #f3f2f1; stroke: #a9a7a5; stroke-width: 1; }
.icons { display: grid; grid-template-columns: repeat(6, 35px); grid-auto-rows: 35px; margin: 9.500px 0 0 7px; place-items: center; flex: none; }
.icons svg { width: 23px; height: 23px; overflow: visible; }
.txt-ic { width: 30px; text-align: center; line-height: 24px; font-weight: 700; color: #1f74b8; }
.r { font-size: 21px; }
.py { font-size: 22px; white-space: nowrap; }
.more { color: #3b3a39; font-size: 17px; letter-spacing: 1px; }
.viz-rule { height: 1px; margin: 8.500px 3px 0 0; background: #dedcda; flex: none; }
.sec-t { margin: 12px 0 0 15px; font-size: 14.200px; line-height: 18px; color: #3b3a39; flex: none; }
.sec-h { margin: 15px 0 0 15px; font-size: 15px; line-height: 18px; color: #3b3a39; flex: none; }
.drop { width: 212px; margin-left: 6px; border: 1px dashed #c8c6c4; background: #fafafa; display: flex; align-items: center; font-size: 15.200px; color: #3b3a39; flex: none; white-space: nowrap; }
.d1 { height: 35px; margin-top: 7px; padding-left: 12px; }
.d2 { height: 31px; margin-top: 13px; padding-left: 9px; }
.opt { display: flex; align-items: center; justify-content: space-between; height: 20px; width: 203px; margin-left: 15px; font-size: 14.800px; color: #3b3a39; flex: none; }
.o1 { margin-top: 12px; }
.o2 { margin-top: 14px; }
.tgl { width: 40px; height: 20px; border-radius: 10px; display: flex; align-items: center; justify-content: space-between; padding: 0 3px 0 5px; font-size: 11px; }
.tgl i { width: 10px; height: 10px; border-radius: 50%; flex: none; }
.off { background: #fff; border: 1px solid #8a8886; color: #605e5c; padding-left: 5px; }
.off i { background: #5c5a58; }
.on { background: #5c5a58; color: #fff; }
.on i { background: #fff; }

/* status */
.status { height: 29px; flex: none; display: flex; align-items: center; justify-content: space-between; border-top: 1px solid #dedcda; background: #f3f2f1; font-size: 15px; color: #605e5c; }
.pg { margin-left: -14px; padding-top: 2px; white-space: nowrap; }
.st-right { width: 294px; flex: none; display: flex; align-items: center; overflow: hidden; white-space: nowrap; }
.st-right > * { flex: none; }
.zm { width: 11px; font-size: 18px; font-weight: 500; margin-left: 2px; }
.zslider { position: relative; width: 125px; height: 1.500px; background: #605e5c; }
.z-h { position: absolute; left: 46px; top: -6px; width: 5px; height: 13px; background: #605e5c; }
.z-t { position: absolute; left: 62px; top: -3px; width: 1px; height: 7px; background: #605e5c; }
.zp { font-size: 20px; margin-left: 6px; width: 22px; }
.pct { font-size: 14px; margin-left: 10px; width: 52px; }
.fit { width: 20px; height: 14px; }
.fit-b { fill: #f3f2f1; stroke: #605e5c; stroke-width: 1.2; }
.upd { margin-left: 23px; font-size: 15px; }

.taskbar { height: 4px; flex: none; display: flex; background: #000; }
.t-a { width: 32px; height: 1px; background: #0078d4; }
.t-b { width: 9px; }
.t-c { width: 360px; background: #777; }
.t-d { width: 913px; }
```
